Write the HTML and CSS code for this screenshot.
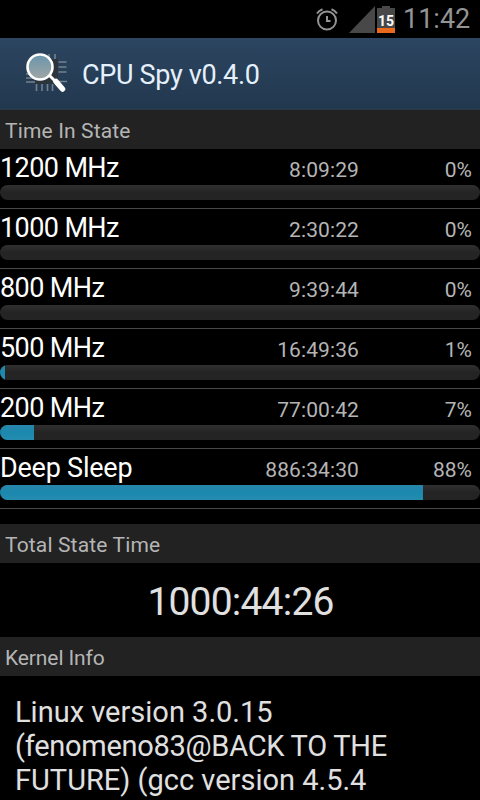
FILE: index.html
```html
<!DOCTYPE html>
<html lang="en">
<head>
<meta charset="utf-8">
<title>CPU Spy</title>
<link rel="stylesheet" href="styles.css">
</head>
<body>
<div class="status">
  <svg class="alarm" width="24" height="24" viewBox="0 0 24 24" fill="none" stroke="#949494" stroke-width="2"><circle cx="12" cy="13.500" r="9"/><path d="M12 9v5h3.500M2 6.500Q4 3.500 7.500 2.200M22 6.500Q20 3.500 16.500 2.200"/></svg>
  <svg class="signal" width="26" height="27" viewBox="0 0 26 27"><path d="M0 27 26 0v27z" fill="#484848"/></svg>
  <div class="battery"><span>15</span></div>
  <div class="clock">11:42</div>
</div>
<header class="bar">
  <svg class="logo" width="48" height="48" viewBox="0 0 48 48">
    <rect x="11" y="9" width="23" height="25" rx="1" fill="#2c353c"/>
    <path d="M13 4v5M19 4v5M25 4v5M31 4v5M12.500 34v7M18 34v7M23.500 34v7M28.500 34v7M34.500 12h8M34.500 17h8M34.500 22h8M35 31.500h8M2 24h8M2 28h9M2 32h9" stroke="#74828b" stroke-width="1.600"/>
    <path d="m32 31.500 6.500 7.500" stroke="#fff" stroke-width="5.500" stroke-linecap="round"/>
    <path d="m25 25 7 7" stroke="#fff" stroke-width="3"/>
    <circle cx="16" cy="17" r="12.500" fill="url(#lens)" stroke="#fff" stroke-width="2.600"/>
    <defs><linearGradient id="lens" x2="0" y2="1"><stop stop-color="#6a95ac"/><stop offset="1" stop-color="#a0a6a5"/></linearGradient></defs>
  </svg>
  <h1>CPU Spy v0.4.0</h1>
</header>
<h2>Time In State</h2>
<div class="states">
  <div class="state"><div class="line"><b>1200 MHz</b><span>8:09:29</span><i>0%</i></div><div class="track"></div></div>
  <div class="state"><div class="line"><b>1000 MHz</b><span>2:30:22</span><i>0%</i></div><div class="track"></div></div>
  <div class="state"><div class="line"><b>800 MHz</b><span>9:39:44</span><i>0%</i></div><div class="track"></div></div>
  <div class="state"><div class="line"><b>500 MHz</b><span>16:49:36</span><i>1%</i></div><div class="track"><div class="fill" style="width:1%"></div></div></div>
  <div class="state"><div class="line"><b>200 MHz</b><span>77:00:42</span><i>7%</i></div><div class="track"><div class="fill" style="width:7.08%"></div></div></div>
  <div class="state"><div class="line"><b class="sleep">Deep Sleep</b><span>886:34:30</span><i>88%</i></div><div class="track"><div class="fill" style="width:88.1%"></div></div></div>
</div>
<h2>Total State Time</h2>
<div class="total">1000:44:26</div>
<h2 class="kernel-head">Kernel Info</h2>
<div class="kernel"><div>Linux version 3.0.15</div><div class="host">(fenomeno83@BACK TO THE</div><div>FUTURE) (gcc version 4.5.4</div></div>
</body>
</html>
```
FILE: styles.css
```css
* { box-sizing: border-box; }
body { margin: 0; width: 480px; height: 800px; overflow: hidden; background: #000; color: #e0e0e0; font-family: Roboto, "Liberation Sans", sans-serif; display: flex; flex-direction: column; }
.status { height: 38px; flex: none; display: flex; justify-content: flex-end; align-items: flex-start; padding-right: 10px; }
.alarm { margin: 7px 10px 0 0; }
.signal { margin: 6px 2px 0 0; }
.battery { width: 18px; height: 27px; margin-top: 6px; background: linear-gradient(#484848 22px, #e96a1c 22px); clip-path: polygon(0 2px, 5px 2px, 5px 0, 13px 0, 13px 2px, 100% 2px, 100% 100%, 0 100%); color: #fff; font-weight: 700; font-size: 14px; line-height: 31px; text-align: center; }
.clock { margin-left: 8px; width: 67px; font-size: 27px; line-height: 38px; color: #949494; white-space: nowrap; }
.bar { height: 72px; flex: none; display: flex; align-items: center; padding-left: 24px; background: linear-gradient(#2c4560, #22384f 97%, #2b3a47); }
.logo { flex: none; margin-right: 10px; }
h1 { margin: 0; padding-top: 2px; font-weight: 400; font-size: 27px; line-height: 36px; letter-spacing: -0.33px; color: #e4f0fc; white-space: nowrap; }
h2 { margin: 0; flex: none; height: 39px; padding: 2px 0 0 5px; background: #222; color: #b5b5b5; font-weight: 400; font-size: 21px; line-height: 38px; letter-spacing: 0.15px; }
.kernel-head { letter-spacing: -0.1px; }
.states { flex: none; height: 375px; }
.state { height: 60px; border-bottom: 1px solid #484848; }
.line { height: 36px; display: flex; align-items: baseline; line-height: 39px; white-space: nowrap; }
.line b { width: 179px; font-weight: 400; font-size: 27px; letter-spacing: -0.6px; color: #fff; }
.line .sleep { letter-spacing: -0.22px; }
.line span { width: 180px; text-align: right; font-size: 21px; letter-spacing: 0.1px; color: #b5b5b5; }
.line i { width: 113px; text-align: right; font-style: normal; font-size: 21px; color: #b5b5b5; }
.track { height: 15px; border-radius: 7.5px; overflow: hidden; background: linear-gradient(#303030, #242424 50%, #242424); }
.fill { height: 100%; background: linear-gradient(#2a86ab, #1b88ae 50%, #258caf); }
.total { height: 74px; flex: none; font-size: 39px; line-height: 78px; letter-spacing: -0.8px; text-align: center; padding-left: 1px; }
.kernel { padding: 19px 15px 0; font-size: 29px; line-height: 34px; white-space: nowrap; }
.host { letter-spacing: -0.27px; }
```
